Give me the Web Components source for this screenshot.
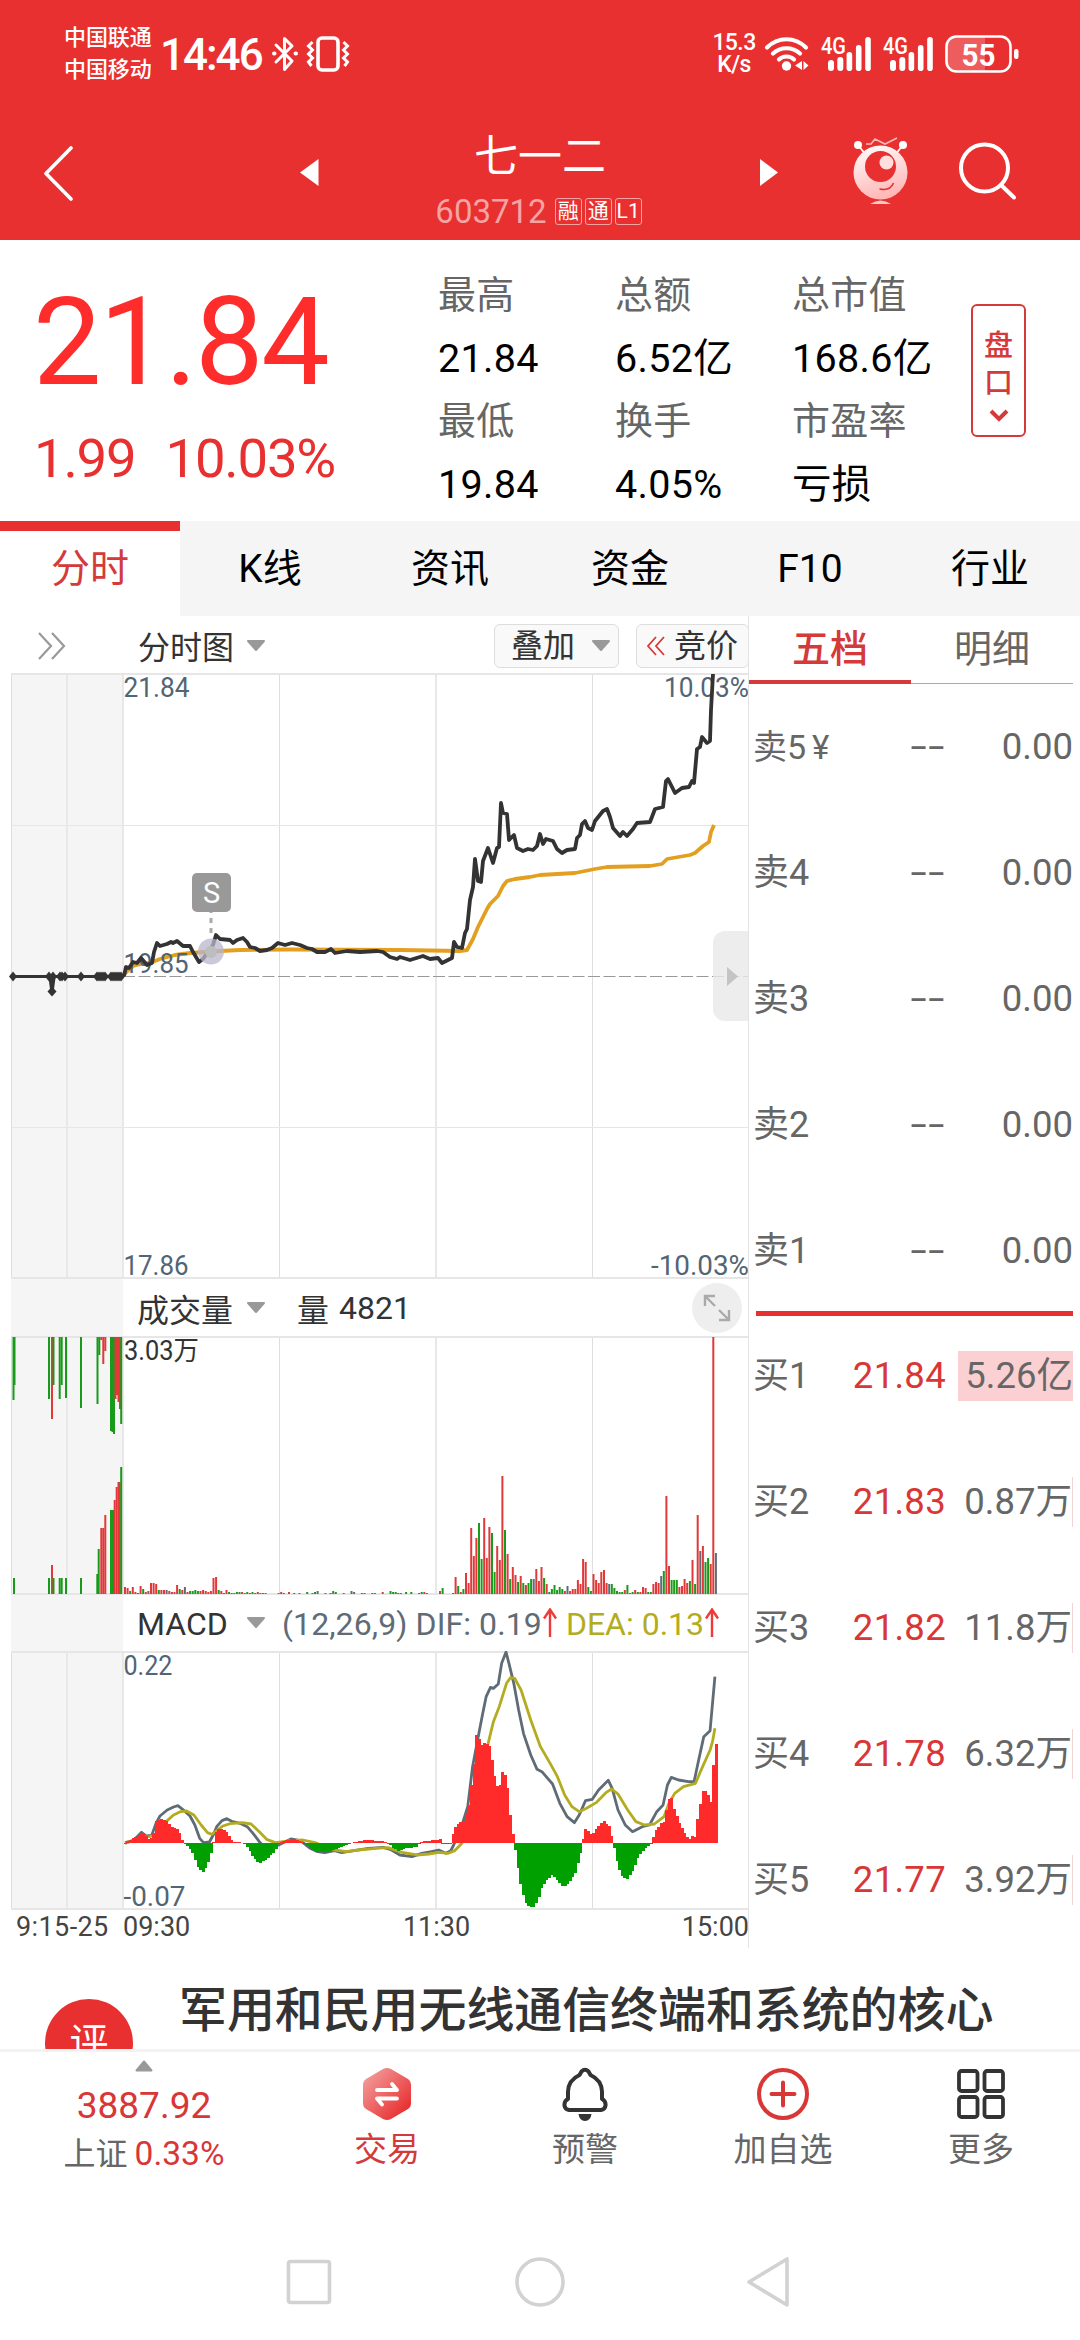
<!DOCTYPE html>
<html lang="zh-CN">
<head>
<meta charset="utf-8">
<title>七一二 603712</title>
<style>
    body {
        margin: 0;
        background: #fff;
        font-family: Roboto, "Noto Sans CJK SC", sans-serif;
        color: #333;
    }
</style>
</head>
<body>
<stock-app></stock-app>

<script>
// small base class, each element only gives its markup
class BaseElement extends HTMLElement {
    constructor() {
        super();
        this.attachShadow({mode: 'open'});
    }

    connectedCallback() {
        this.shadowRoot.innerHTML = `
            <style>
            :host { display: block; box-sizing: border-box; }
            * { box-sizing: border-box; }
            svg { display: block; flex: none; }
            </style>
            ${this.render()}
        `;
    }

    render() {
        return '<slot></slot>';
    }
}

class StockApp extends BaseElement {
    render() {
        return `
            <style>
            :host { width: 1080px; height: 2340px; overflow: hidden; }
            header { background: #e83030; height: 240px; }
            main { display: grid; grid-template-columns: 749px 331px; height: 1332px; }
            </style>
            <header>
                <status-bar></status-bar>
                <title-bar code="603712">七一二</title-bar>
            </header>
            <quote-summary></quote-summary>
            <tab-strip></tab-strip>
            <main>
                <stock-charts></stock-charts>
                <order-book></order-book>
            </main>
            <news-teaser>军用和民用无线通信终端和系统的核心</news-teaser>
            <bottom-bar></bottom-bar>
            <system-nav></system-nav>
        `;
    }
}

class SignalBars extends BaseElement {
    render() {
        return `
            <style>
            :host { width: 50px; height: 36px; }
            svg { overflow: visible; }
            </style>
            <svg width="50" height="36" viewBox="0 0 50 36" fill="#fff">
                <text x="0" y="17.500" font-size="24" font-weight="500" textLength="25" lengthAdjust="spacingAndGlyphs">4G</text>
                <rect x="7" y="24" width="6" height="11" rx="3"/>
                <rect x="16.3" y="21" width="6" height="14" rx="3"/>
                <rect x="25.6" y="16" width="5.6" height="19" rx="2.8"/>
                <rect x="34.9" y="9" width="5.6" height="26" rx="2.8"/>
                <rect x="44.2" y="1" width="5.6" height="34" rx="2.8"/>
            </svg>
        `;
    }
}

class StatusBar extends BaseElement {
    render() {
        return `
            <style>
            :host { display: flex; align-items: center; height: 108px; padding: 0 60px 0 64px; color: #fff; }
            .carrier { font-size: 22px; line-height: 32px; width: 96px; font-weight: 500; white-space: nowrap; letter-spacing: -.1px; }
            .time { font-size: 44px; font-weight: 500; width: 111px; letter-spacing: -2px; line-height: 50px; margin-top: 2px; }
            .speed { margin-left: auto; width: 46px; text-align: center; font-size: 23px; line-height: 22px; font-weight: 500; letter-spacing: -.6px; }
            .wifi { margin-left: 7px; }
            signal-bars { margin-left: 11px; }
            signal-bars + signal-bars { margin-left: 12px; }
            .battery { margin-left: 12px; }
            </style>
            <div class="carrier">中国联通<br>中国移动</div>
            <div class="time">14:46</div>
            <svg width="28" height="36" viewBox="0 0 28 36" fill="none" stroke="#fff" stroke-width="3" stroke-linejoin="round" stroke-linecap="round">
                <path d="M5 9l16 16-7.5 8.500V2.500L21 10 5 26"/>
                <path d="M3 17.500h.5M24.500 17.500h.5" stroke-width="4"/>
            </svg>
            <svg width="44" height="36" viewBox="0 0 44 36" fill="none" stroke="#fff" style="margin-left:7px">
                <rect x="12" y="2" width="20" height="32" rx="4" stroke-width="3.6"/>
                <path d="M6.500 6l-4 4 4 4-4 4 4 4-4 4 3 4M37.500 6l4 4-4 4 4 4-4 4 4 4-3 4" stroke-width="3"/>
            </svg>
            <div class="speed">15.3<br>K/s</div>
            <svg class="wifi" width="46" height="36" viewBox="0 0 46 36" fill="none" stroke="#fff" stroke-width="4.200" stroke-linecap="round">
                <path d="M3 11.500C14 .5 31 .5 42 11.500M9 17.500c7.500-7 19.500-7 27 0M15 23.500c4-4 11-4 15 0"/>
                <circle cx="22.500" cy="30" r="4.700" fill="#fff" stroke="none"/>
                <path d="M38 25v9l-7-4.500zM39.500 25v9l5-4.500z" fill="#fff" stroke="none"/>
            </svg>
            <signal-bars></signal-bars>
            <signal-bars></signal-bars>
            <svg class="battery" width="75" height="38" viewBox="0 0 75 38" fill="#fff">
                <path d="M12 2h28v34H12A10 10 0 0 1 2 26V12A10 10 0 0 1 12 2z" opacity=".22"/>
                <rect x="1.500" y="1.500" width="64" height="35" rx="10" fill="none" stroke="#fff" stroke-width="2.600"/>
                <rect x="69" y="14" width="4.500" height="10" rx="2.200"/>
                <text x="33.500" y="30.500" font-size="32" font-weight="700" text-anchor="middle" textLength="34" lengthAdjust="spacingAndGlyphs">55</text>
            </svg>
        `;
    }
}

class TitleBar extends BaseElement {
    render() {
        return `
            <style>
            :host { display: grid; grid-template-columns: 300px 138px 204px 210px 228px; height: 132px; color: #fff; }
            .name { font-size: 44px; line-height: 56px; margin-top: 21px; text-align: center; }
            .back { margin: 37px 0 0 43px; }
            .arrow { margin-top: 51px; }
            .code { display: flex; justify-content: center; align-items: center; gap: 3px; margin: 9px 0 0 -3px; height: 34px; color: #f5a3a3; font-size: 33px; white-space: nowrap; }
            .code b { font-weight: 400; width: 27px; height: 27px; line-height: 24px; border: 1.500px solid #f5a3a3; border-radius: 3px; font-size: 21px; text-align: center; color: #fff; }
            .code span { margin-right: 5px; }
            .tools { display: flex; gap: 48px; padding: 29px 0 0 1px; }
            </style>
            <svg class="back" width="32" height="56" viewBox="0 0 32 56" fill="none" stroke="#fff" stroke-width="3.600" stroke-linecap="round" stroke-linejoin="round"><path d="M28 3L3 28.500 28 54"/></svg>
            <svg class="arrow" width="20" height="28" viewBox="0 0 20 28" fill="#fff"><path d="M18.500 0v27L0 13.500z"/></svg>
            <div>
                <div class="name"><slot></slot></div>
                <div class="code"><span>${this.getAttribute('code')}</span><b>融</b><b>通</b><b>L1</b></div>
            </div>
            <svg class="arrow" width="20" height="28" viewBox="0 0 20 28" fill="#fff" style="margin-left:117px"><path d="M1 0v27l18-13.500z"/></svg>
            <div class="tools">
                <svg width="56" height="70" viewBox="0 0 56 70">
                    <defs><linearGradient id="body" x1="0" y1="0" x2=".3" y2="1"><stop offset="0" stop-color="#fff"/><stop offset="1" stop-color="#ffb9b9"/></linearGradient></defs>
                    <path d="M13 7h5l4-5 10 5L44 1" fill="none" stroke="#ffb9b9" stroke-width="1.600"/>
                    <path d="M5 8l8 10M50 8l-8 10" stroke="#fff" stroke-width="1.800"/>
                    <circle cx="5" cy="8" r="4" fill="#fff"/><circle cx="50" cy="8" r="4" fill="#fff"/>
                    <circle cx="27.500" cy="35.500" r="27" fill="url(#body)"/>
                    <circle cx="27.500" cy="29.500" r="15.500" fill="#e83030"/>
                    <circle cx="33.500" cy="25.500" r="7" fill="#ffdede"/>
                    <path d="M26.500 52c7 1.500 12-1 14-6" fill="none" stroke="#e83030" stroke-width="1.600"/>
                    <path d="M17 67q10.500-7 21 0z" fill="#ffc8c8"/>
                </svg>
                <svg width="62" height="64" viewBox="0 0 62 64" fill="none" stroke="#fff" stroke-width="4" stroke-linecap="round" style="margin-top:3px"><circle cx="27.500" cy="28" r="23.500"/><path d="M44 45l13 12.500"/></svg>
            </div>
        `;
    }
}

class QuoteItem extends BaseElement {
    render() {
        return `
            <style>
            :host { line-height: 63px; white-space: nowrap; font-size: 39.500px; letter-spacing: .3px; }
            .label { font-size: 38px; color: #666; }
            .value { color: #000; }
            </style>
            <div class="label">${this.getAttribute('label')}</div>
            <div class="value"><slot></slot></div>
        `;
    }
}

class QuoteSummary extends BaseElement {
    render() {
        return `
            <style>
            :host { display: grid; grid-template-columns: 438px 533px 55px; height: 281px; }
            .price { font-size: 122px; line-height: 140px; color: #ff2c2c; margin: 33px 0 0 33px; letter-spacing: -2.400px; }
            .change { display: flex; gap: 30px; margin: 15px 0 0 34px; font-size: 54.500px; line-height: 60px; color: #e83030; letter-spacing: -1.200px; }
            .items { display: grid; grid-template-columns: 177px 177px 179px; grid-template-rows: 126px 126px; padding-top: 24px; }
            .more { margin-top: 64px; height: 133px; border: 2.500px solid #d43a3a; border-radius: 6px; color: #d43a3a; font-size: 29px; line-height: 37px; text-align: center; padding-top: 22px; font-weight: 500; }
            .more svg { margin: 6px auto 0; }
            </style>
            <div>
                <div class="price">21.84</div>
                <div class="change"><span>1.99</span><span>10.03%</span></div>
            </div>
            <div class="items">
                <quote-item label="最高">21.84</quote-item>
                <quote-item label="总额">6.52亿</quote-item>
                <quote-item label="总市值">168.6亿</quote-item>
                <quote-item label="最低">19.84</quote-item>
                <quote-item label="换手">4.05%</quote-item>
                <quote-item label="市盈率">亏损</quote-item>
            </div>
            <div class="more">盘<br>口
                <svg width="20" height="16" viewBox="0 0 20 16" fill="none" stroke="#d43a3a" stroke-width="4"><path d="M2 3l8 8 8-8"/></svg>
            </div>
        `;
    }
}

class TabStrip extends BaseElement {
    render() {
        const tabs = ['分时', 'K线', '资讯', '资金', 'F10', '行业'];
        return `
            <style>
            :host { display: grid; grid-template-columns: repeat(6, 1fr); height: 95px; }
            div { background: #f5f5f5; color: #000; font-size: 39px; line-height: 97px; text-align: center; overflow: hidden; }
            .active { background: #fff; color: #d43a3a; border-top: 10px solid #e83030; line-height: 77px; }
            </style>
            ${tabs.map((t, i) => `<div class="${i === 0 ? 'active' : ''}">${t}</div>`).join('')}
        `;
    }
}

// px per minute and x of the first minute
const STEP = 2.603;
const FIRST = 125;
const RED = '#e2383a';
const GREEN = '#1a9a1a';
const GREY = '#5f6b78';
const COLORS = {r: RED, g: GREEN, b: GREY};

const PRICE = '124,976 126,967 129,968 133,962 137,963 141,958 147,965 152,963 154,952 157,943 160,946 167,944 171,942 173,943 177,941 183,946 190,946 193,952 199,962 203,959 208,952 213,945 216,935 220,939 230,940 233,943 237,940 243,938 247,942 250,947 255,948 260,951 267,950 272,948 278,943 285,945 292,943 300,945 307,948 312,949 317,952 325,952 331,949 335,953 347,951 360,952 377,951 383,952 390,957 397,959 400,957 410,960 423,956 430,959 438,958 442,963 452,958 454,942 457,947 462,948 465,933 467,929 470,900 473,887 475,859 478,881 481,882 483,861 488,848 493,863 497,848 499,847 501,803 503,813 507,814 509,840 514,835 517,848 523,851 528,849 533,850 537,846 540,834 543,844 546,839 553,841 557,849 562,853 567,850 575,849 577,838 580,835 582,824 585,821 588,828 592,830 595,821 603,811 607,809 610,817 613,828 620,836 623,832 627,836 633,829 637,823 650,822 655,809 663,807 666,781 668,779 675,793 682,788 689,787 692,781 694,783 697,749 700,747 702,737 707,743 710,741 711,710 713,674';
const AVERAGE = '124,974 133,966 141,964 150,963 160,959 175,955 190,953 205,952 220,951 240,950 290,949.5 400,950 460,951 467,950 473,939 478,927 487,909 490,904 498,896 503,886 507,881 515,879 530,877 540,875 575,873 585,871 595,869 607,867 650,866 662,864 667,859 690,855 695,853 703,846 709,842 711,832 714,825';

// colour and height of every minute, "-" is an empty minute
const VOLUME = `r7 r6 g3 r7 r2 g1 r8 g5 r2 b3 r11 r11 r10 g4 r4 r4 b4 r3 r2 r2 r9 g5 r4 b7 r2 g3 g3 g4 g3 r3 r4 r3 r2 r3 r16 r17 g4 r3 g1 r4
    g2 g1 r1 g2 g2 r2 r1 g2 r1 g2 g1 r2 g1 r1 r1 - - - - r1 r2 g1 - r2 - g1 - b1 - - g2 - r1 g2 b3 - - r1 - g1 g3 g2 - - r1 - - b3 b2 - -
    r1 b1 - - g1 r1 - - r2 - - g3 g2 g2 g1 r1 - g2 - g2 - - b1 g2 r2 g1 - - - - r3 g6 - - - r1 r17 g8 r2 g5 r21 r11
    r66 r38 r56 g71 g35 r76 r36 r67 g61 g22 r48 r34 r118 g64 r40 g15 r27 r19 g12 r18 g11 r9 g11 g15 b15 r25 r13 r27 g16 r10 g2 g5 g9 g4 g7 g5 r3 b8
    r3 r5 r5 r14 r10 r35 r32 g7 g3 r20 r14 r11 r22 r24 r11 b10 g10 g6 g3 g2 g2 r4 g9 r1 g2 r4 g2 r2 r7 r6 g2 g2 r10 r12 r11 b18 g23 r98
    r28 g14 g14 g14 r7 r8 r15 r11 g13 r34 g10 r79 b43 r48 g32 g36 r30 r257 b41`.split(/\s+/);

// call auction: x, colour, height
const AUCTION_TOP = '13.5g63 14.5g48 49g62 52r82 53.5g48 59.7g62 61.7g48 66g61 81g71 97.5g67 99.3g18 101.3r3 103.3r27 105.3r14 111g94 112.5g95 114g97 115.5r62 117r58 118.5r65 120r72 121.2g87';
const AUCTION_LOW = '14g16 49g16 52r29 53.5g16 59.7g16 61.7g16 66g16 81g16 97.3g20 98.7g45 101.3r66 103.3r66 105.3r79 111g84 113g84 114.7r94 116.7r107 118.5r112 119.7r112 121.2g127';

// keypoints of the macd chart, x is in minutes * 5.36
const UNIT = 0.4847;
const HIST = '258,0 274,5 284,7 292,11 300,8 308,3 316,8 322,22 330,24 345,22 355,16 368,13 375,4 380,0 388,-3 398,-10 408,-24 418,-30 428,-22 436,-8 440,0 443,10 452,15 465,12 475,5 482,1 495,1 503,0 510,-4 525,-16 535,-20 550,-16 565,-9 575,0 590,3 605,4 618,2 625,0 640,-6 655,-9 675,-9 690,-6 705,-4 720,0 740,2 755,3 790,2 800,0 810,-5 822,-8 835,-5 858,-4 866,0 872,2 900,3 908,4 912,0 920,-1 928,0 936,14 945,20 955,22 965,36 970,55 976,77 980,108 985,108 990,97 998,100 1008,98 1014,82 1020,65 1028,50 1033,72 1044,66 1050,33 1057,8 1060,0 1065,-18 1075,-48 1085,-62 1098,-65 1108,-58 1115,-45 1125,-38 1138,-32 1148,-37 1160,-44 1172,-40 1185,-30 1195,-12 1200,0 1205,15 1212,12 1220,8 1230,16 1245,22 1256,16 1262,4 1264,0 1270,-16 1280,-33 1293,-36 1305,-26 1315,-14 1330,-5 1342,0 1350,12 1362,20 1370,22 1375,42 1383,46 1390,32 1400,20 1412,8 1420,3 1428,8 1433,5 1438,28 1448,52 1455,52 1465,40 1470,84 1477,106'.split(' ').map(p => p.split(',').map(Number));
const DIF = '258,728 275,722 292,697 302,708 313,706 322,670 330,648 345,630 358,621 367,617 380,632 392,648 402,675 412,715 420,728 432,726 440,705 447,680 458,662 468,656 478,664 495,670 510,680 522,700 535,725 545,740 560,742 575,735 600,717 620,722 640,745 655,755 670,758 690,752 705,758 730,752 760,745 790,742 805,748 825,765 850,770 870,760 890,755 905,750 920,760 930,752 936,735 950,690 965,620 975,500 988,400 996,340 1003,290 1012,262 1018,265 1028,252 1035,190 1044,156 1050,190 1060,250 1070,330 1080,400 1095,465 1108,508 1118,515 1140,552 1155,610 1170,650 1185,668 1195,645 1208,602 1222,598 1235,570 1255,541 1263,565 1275,630 1290,675 1305,695 1325,680 1340,675 1355,635 1368,615 1377,555 1385,532 1400,540 1420,545 1432,545 1440,490 1452,410 1465,392 1470,310 1475,230';
const DEA = '258,730 292,712 308,710 322,705 345,662 358,645 372,635 385,633 400,645 415,675 428,698 437,703 447,692 460,678 475,671 500,668 518,672 535,695 550,718 568,728 600,722 625,720 650,728 670,740 690,750 715,755 740,750 775,745 800,743 830,757 860,765 885,762 905,757 925,760 938,752 953,730 970,670 990,540 1008,425 1018,365 1030,320 1045,250 1053,233 1062,235 1075,270 1095,360 1115,440 1135,490 1150,530 1165,585 1180,620 1195,635 1210,625 1230,608 1250,578 1262,567 1275,582 1295,630 1312,665 1330,675 1350,672 1370,650 1380,610 1392,580 1410,560 1435,550 1445,515 1465,450 1470,425 1475,385';

// grey auction area and the grid lines of one panel
function grid(top, bottom, rows = []) {
    const v = [[11.5, 1], [67, 2], [123, 2], [279.5, 1], [436, 2], [592.5, 1]];
    return `
        <rect x="11" y="${top}" width="112" height="${bottom - top}" fill="#f5f5f5"/>
        ${v.map(([x, w]) => `<rect x="${x - w / 2}" y="${top}" width="${w}" height="${bottom - top}" fill="${w === 1 ? '#dedede' : '#e8e8e8'}"/>`).join('')}
        ${[top, ...rows, bottom - 2].map(y => `<rect x="11" y="${y}" width="737" height="${rows.includes(y) ? 1 : 2}" fill="#e6e6e6"/>`).join('')}
    `;
}

function auctionBars(list, y, down) {
    return list.split(' ').map(s => {
        const [, x, c, h] = s.match(/([\d.]+)([rgb])(\d+)/);
        return `<rect x="${x - 1}" y="${down ? y : y - h}" width="2" height="${h}" fill="${COLORS[c]}"/>`;
    }).join('');
}

function histValue(x) {
    for (let i = 1; i < HIST.length; i++) {
        if (x <= HIST[i][0]) {
            const [x0, y0] = HIST[i - 1];
            const [x1, y1] = HIST[i];
            return y0 + (y1 - y0) * (x - x0) / (x1 - x0);
        }
    }
    return 0;
}

class PriceChart extends BaseElement {
    render() {
        const dots = [13, 49, 53, 60, 62, 65, 81, 97, 99, 101, 103, 105, 111, 113, 115, 117, 119, 121];
        return `
            <style>
            :host { height: 606px; }
            text { font-size: 27px; fill: #536473; }
            </style>
            <svg width="749" height="606" viewBox="0 673 749 606">
                ${grid(673, 1279, [825, 1127])}
                <path d="M123 976.500H748" stroke="#999" stroke-dasharray="12 3.500"/>
                <path d="M713 943a12 12 0 0 1 12-12h23v90h-23a12 12 0 0 1-12-12z" fill="#e9e9e9" opacity=".8"/>
                <path d="M727 967l11 9.500-11 9.500z" fill="#c4c4c4"/>
                <polyline points="${AVERAGE}" fill="none" stroke="#e3a020" stroke-width="3.800" stroke-linejoin="round"/>
                <text x="123.500" y="973" textLength="65" lengthAdjust="spacingAndGlyphs">19.85</text>
                <path d="M12 976.500H124M50 977l2 15 2-15" stroke="#333" stroke-width="3.200" fill="none"/>
                ${dots.map(x => `<path d="M${x - 4} 976.500l4-5 4 5-4 5z" fill="#333"/>`).join('')}
                <path d="M47.500 991.500l4.500-5 4.500 5-4.500 5z" fill="#333"/>
                <text x="123.500" y="697" textLength="66" lengthAdjust="spacingAndGlyphs">21.84</text>
                <text x="749" y="697" text-anchor="end" textLength="85" lengthAdjust="spacingAndGlyphs">10.03%</text>
                <text x="123.500" y="1274.500" textLength="65" lengthAdjust="spacingAndGlyphs">17.86</text>
                <text x="749" y="1274.500" text-anchor="end" textLength="98" lengthAdjust="spacingAndGlyphs">-10.03%</text>
                <polyline points="${PRICE}" fill="none" stroke="#333" stroke-width="3.800" stroke-linejoin="round"/>
                <path d="M211 912v24" stroke="#aaa" stroke-width="3" stroke-dasharray="5 5" stroke-dashoffset="4"/>
                <circle cx="211" cy="951.500" r="13" fill="#b9b6cc" opacity=".75"/>
                <circle cx="211" cy="952" r="6" fill="#bdbdbd"/>
                <rect x="192" y="873" width="39" height="39" rx="5" fill="#999"/>
                <text x="211.500" y="902.500" text-anchor="middle" style="font-size:29px;fill:#fff">S</text>
            </svg>
        `;
    }
}

class VolumeChart extends BaseElement {
    render() {
        const bars = VOLUME.map((v, i) => {
            if (v === '-') return '';
            const h = +v.slice(1);
            return `<rect x="${(FIRST + i * STEP - 1).toFixed(1)}" y="${1594 - h}" width="2" height="${h}" fill="${COLORS[v[0]]}"/>`;
        }).join('');
        return `
            <style>
            :host { height: 259px; }
            </style>
            <svg width="749" height="259" viewBox="0 1336 749 259">
                ${grid(1336, 1595)}
                ${auctionBars(AUCTION_TOP, 1337, true)}
                ${auctionBars(AUCTION_LOW, 1594, false)}
                ${bars}
                <text x="124" y="1360" font-size="27" fill="#333" textLength="75" lengthAdjust="spacingAndGlyphs">3.03万</text>
            </svg>
        `;
    }
}

class MacdChart extends BaseElement {
    render() {
        let bars = '';
        for (let i = 0; i < 228; i++) {
            const h = histValue(258 + i * 5.36);
            bars += `<rect x="${(FIRST + i * STEP - 1.3).toFixed(2)}" y="${(h > 0 ? 1843 - h : 1843).toFixed(1)}" width="3" height="${Math.max(Math.abs(h), .8).toFixed(1)}" fill="${h >= 0 ? '#ff2a2a' : '#00a000'}"/>`;
        }
        return `
            <style>
            :host { height: 259px; }
            text { font-size: 27px; fill: #536473; }
            polyline { fill: none; stroke-width: 2.8px; stroke-linejoin: round; vector-effect: non-scaling-stroke; }
            </style>
            <svg width="749" height="259" viewBox="0 1651 749 259">
                ${grid(1651, 1910)}
                <g transform="translate(0 1600) scale(${UNIT} .33333)">
                    <polyline points="${DIF}" stroke="#5f6b75"/>
                    <polyline points="${DEA}" stroke="#b3ac1e"/>
                </g>
                <g shape-rendering="crispEdges">${bars}</g>
                <text x="123.500" y="1674.500" textLength="49" lengthAdjust="spacingAndGlyphs">0.22</text>
                <text x="123.500" y="1905.500" textLength="62" lengthAdjust="spacingAndGlyphs">-0.07</text>
            </svg>
        `;
    }
}

class DropArrow extends BaseElement {
    render() {
        return `
            <style>
            :host { width: 20px; height: 12px; flex: none; }
            </style>
            <svg width="20" height="12" viewBox="0 0 20 12"><path d="M2 1h16l-8 9z" fill="#999" stroke="#999" stroke-width="2" stroke-linejoin="round"/></svg>
        `;
    }
}

class ChartHeader extends BaseElement {
    render() {
        return `
            <style>
            :host { display: flex; align-items: center; padding-left: 11px; font-size: 32px; white-space: nowrap; }
            .pad { width: 112px; align-self: stretch; background: #f5f5f5; margin-right: 14px; flex: none; }
            .name { width: 109px; flex: none; padding-top: 1px; }
            drop-arrow { margin-right: 16px; }
            </style>
            <div class="pad"></div>
            <div class="name">${this.getAttribute('name')}</div>
            <drop-arrow></drop-arrow>
            <slot></slot>
        `;
    }
}

class StockCharts extends BaseElement {
    render() {
        const up = '<svg width="16" height="30" viewBox="0 0 16 30" fill="none" stroke="#f03a3a" stroke-width="2.400"><path d="M8 29V2M2 10.500L8 1.500l6 9"/></svg>';
        return `
            <style>
            :host { border-right: 1px solid #e3e3e3; width: 749px; overflow: hidden; }
            .tools { display: flex; align-items: center; height: 57px; padding: 3px 0 0 37px; font-size: 32px; white-space: nowrap; }
            .tools .type { margin: 0 12px 2px 71px; flex: none; width: 96px; }
            .btn { display: flex; flex: none; align-items: center; height: 44px; border: 1.500px solid #ddd; border-radius: 6px; background: #f9f9f9; line-height: 40px; }
            .volume { height: 57px; }
            .macd { height: 56px; }
            .qty { margin: 0 auto 0 10px; }
            .expand { margin-right: 6px; }
            .dif, .dea, .vol, .qty { padding-top: 1px; }
            .dif { color: #5f6b75; letter-spacing: .1px; }
            .dea { color: #b3ac1e; letter-spacing: 0; margin-left: 8px; }
            .axis { display: grid; grid-template-columns: 112px 247px 133px 246px; padding-left: 11px; height: 36px; font-size: 27px; line-height: 34px; color: #444; }
            .axis span:first-child { padding-left: 5px; letter-spacing: .4px; }
            .axis span:nth-child(3) { text-align: center; }
            .axis span:last-child { text-align: right; }
            </style>
            <div class="tools">
                <svg width="30" height="30" viewBox="0 0 30 30" fill="none" stroke="#999" stroke-width="2.200"><path d="M2 2l12 13L2 28M15 2l12 13-12 13"/></svg>
                <span class="type">分时图</span><drop-arrow></drop-arrow>
                <div class="btn" style="margin-left:228px;width:125px;padding-left:16px">叠加<drop-arrow style="margin-left:16px"></drop-arrow></div>
                <div class="btn" style="margin-left:17px;width:113px;padding-left:9px">
                    <svg width="20" height="20" viewBox="0 0 20 20" fill="none" stroke="#d43a3a" stroke-width="1.800" style="margin-right:8px"><path d="M10 1l-8 9 8 9M18 1l-8 9 8 9"/></svg>竞价
                </div>
            </div>
            <price-chart></price-chart>
            <chart-header class="volume" name="成交量">
                <span class="vol" style="margin-left:15px">量</span><span class="qty">4821</span>
                <svg class="expand" width="50" height="50" viewBox="0 0 50 50" fill="none" stroke="#aaa" stroke-width="2.400">
                    <circle cx="25" cy="25" r="25" fill="#eee" stroke="none"/>
                    <path d="M13 23V13h10M13 13l10 10M37 27v10H27M37 37L27 27"/>
                </svg>
            </chart-header>
            <volume-chart></volume-chart>
            <chart-header class="macd" name="MACD">
                <span class="dif">(12,26,9) DIF: 0.19</span>${up}
                <span class="dea">DEA: 0.13</span>${up}
            </chart-header>
            <macd-chart></macd-chart>
            <div class="axis"><span>9:15-25</span><span>09:30</span><span>11:30</span><span>15:00</span></div>
        `;
    }
}

class OrderRow extends BaseElement {
    render() {
        const buy = this.hasAttribute('buy');
        const full = this.hasAttribute('full');
        return `
            <style>
            :host { display: grid; grid-template-columns: 68px 125px 127px; align-items: center; height: 126px; padding-left: 4px; font-size: 36.500px; line-height: 50px; color: #666; white-space: nowrap; }
            .price { text-align: right; color: ${buy ? '#d93636' : '#666'}; letter-spacing: .3px; }
            .price.none { transform: scaleX(1.6); transform-origin: right; letter-spacing: 1px; }
            .side { font-size: 36px; height: 51px; }
            .qty { justify-self: end; height: 50px; text-align: right; padding-left: 7px;
                ${full ? 'background: #fbd0d2;' : buy ? 'border-right: 1px solid #f3d3d5;' : ''} }
            </style>
            <span class="side"><slot></slot></span>
            <span class="price ${buy ? '' : 'none'}">${this.getAttribute('price')}</span>
            <span class="qty">${this.getAttribute('qty')}</span>
        `;
    }
}

class OrderBook extends BaseElement {
    render() {
        return `
            <style>
            :host { padding-right: 7px; }
            .tabs { display: grid; grid-template-columns: 162px 162px; height: 68px; font-size: 38px; line-height: 66px; text-align: center; color: #666; }
            .tabs div { border-bottom: 1px solid #d49a9a; height: 68px; }
            .tabs .active { color: #d43a3a; font-weight: 500; border-bottom: 4px solid #d43a3a; }
            .sell { height: 629px; }
            .line { height: 5px; margin: -2px 0 -3px 7px; background: #e83030; }
            .yen { font-size: 33px; margin-left: 6px; }
            .first { font-size: 34px; }
            </style>
            <div class="tabs"><div class="active">五档</div><div>明细</div></div>
            <div class="sell">
                <order-row price="--" qty="0.00"><span class="first">卖5</span><span class="yen">¥</span></order-row>
                <order-row price="--" qty="0.00">卖4</order-row>
                <order-row price="--" qty="0.00">卖3</order-row>
                <order-row price="--" qty="0.00">卖2</order-row>
                <order-row price="--" qty="0.00">卖1</order-row>
            </div>
            <div class="line"></div>
            <order-row buy full price="21.84" qty="5.26亿">买1</order-row>
            <order-row buy price="21.83" qty="0.87万">买2</order-row>
            <order-row buy price="21.82" qty="11.8万">买3</order-row>
            <order-row buy price="21.78" qty="6.32万">买4</order-row>
            <order-row buy price="21.77" qty="3.92万">买5</order-row>
        `;
    }
}

class NewsTeaser extends BaseElement {
    render() {
        return `
            <style>
            :host { display: flex; height: 101px; overflow: hidden; padding-left: 45px; }
            .badge { flex: none; width: 88px; height: 88px; margin-top: 51px; border-radius: 50%; background: #e83030; color: #fff; font-size: 39px; line-height: 89px; text-align: center; }
            .title { margin-left: 46px; font-size: 48px; line-height: 72px; margin-top: 27px; font-weight: 500; letter-spacing: -.1px; white-space: nowrap; }
            </style>
            <div class="badge">评</div>
            <div class="title"><slot></slot></div>
        `;
    }
}

class NavItem extends BaseElement {
    render() {
        return `
            <style>
            :host { display: flex; flex-direction: column; align-items: center; padding-top: 15px; font-size: 33px; line-height: 40px; color: #666; }
            .icon { height: 63px; }
            </style>
            <div class="icon"><slot name="icon"></slot></div>
            <slot></slot>
        `;
    }
}

class BottomBar extends BaseElement {
    render() {
        return `
            <style>
            :host { display: grid; grid-template-columns: 288px repeat(4, 198px); height: 133px; border-top: 3px solid #f3f3f3; }
            .index { color: #d93636; text-align: center; }
            .index svg { margin: 8px auto 0 134px; }
            .point { font-size: 37px; line-height: 44px; margin-top: 12px; }
            .rate { font-size: 33.500px; line-height: 44px; margin-top: 4px; }
            .rate span { color: #666; font-size: 32px; margin-right: 7px; }
            </style>
            <div class="index">
                <svg width="20" height="12" viewBox="0 0 20 12"><path d="M10 1.500l7.500 9h-15z" fill="#999" stroke="#999" stroke-width="2" stroke-linejoin="round"/></svg>
                <div class="point">3887.92</div>
                <div class="rate"><span>上证</span>0.33%</div>
            </div>
            <nav-item style="color:#d43a3a">
                <svg slot="icon" width="48" height="54" viewBox="0 0 48 54">
                    <defs><linearGradient id="hex" x1="0" y1="0" x2="1" y2="1"><stop offset=".1" stop-color="#f39a9a"/><stop offset=".85" stop-color="#e83232"/></linearGradient></defs>
                    <path d="M20 2q4-2 8 0l17 10q3 2 3 5v20q0 3-3 5L28 52q-4 2-8 0L3 42q-3-2-3-5V17q0-3 3-5z" fill="url(#hex)"/>
                    <path d="M14 23h20l-5-6M34 31.500H14l5 6" fill="none" stroke="#fff" stroke-width="3.800" stroke-linecap="round" stroke-linejoin="round"/>
                </svg>
                交易
            </nav-item>
            <nav-item>
                <svg slot="icon" width="48" height="54" viewBox="0 0 48 54" fill="none" stroke="#333" stroke-width="4" stroke-linejoin="round">
                    <path d="M20.500 4.500q3.500-3.500 7 0l2 3.500q11 5 11.500 16.500v7.500q4 2 3.500 6.500-.5 4-4.500 4.500H8q-4-.5-4.500-4.500Q3 34 7 32v-7.500Q7.500 13 18.500 8z"/>
                    <path d="M17.500 47h13q-1 7-6.500 7t-6.500-7z" fill="#333" stroke="none"/>
                </svg>
                预警
            </nav-item>
            <nav-item>
                <svg slot="icon" width="54" height="54" viewBox="0 0 54 54" fill="none" stroke="#d93636" stroke-width="4" stroke-linecap="round"><circle cx="27" cy="27" r="24"/><path d="M27 15.500v23M15.500 27h23"/></svg>
                加自选
            </nav-item>
            <nav-item>
                <svg slot="icon" width="50" height="54" viewBox="0 0 50 54" fill="none" stroke="#333" stroke-width="3.800">
                    <rect x="3" y="4" width="18.500" height="20" rx="2.500"/><rect x="28.500" y="4" width="18.500" height="20" rx="2.500"/>
                    <rect x="3" y="30" width="18.500" height="20" rx="2.500"/><rect x="28.500" y="30" width="18.500" height="20" rx="2.500"/>
                </svg>
                更多
            </nav-item>
        `;
    }
}

class SystemNav extends BaseElement {
    render() {
        return `
            <style>
            :host { display: flex; justify-content: center; gap: 179px; height: 158px; padding-top: 74px; }
            </style>
            <svg width="52" height="52" viewBox="0 0 52 52" fill="none" stroke="#d2d2d2" stroke-width="3.600"><rect x="5.500" y="5.500" width="41" height="41" rx="2"/></svg>
            <svg width="52" height="52" viewBox="0 0 52 52" fill="none" stroke="#d2d2d2" stroke-width="3.600"><circle cx="26" cy="26" r="23"/></svg>
            <svg width="52" height="52" viewBox="0 0 52 52" fill="none" stroke="#d2d2d2" stroke-width="3.600" stroke-linejoin="round"><path d="M42 3v46L4 26z"/></svg>
        `;
    }
}

customElements.define('signal-bars', SignalBars);
customElements.define('status-bar', StatusBar);
customElements.define('title-bar', TitleBar);
customElements.define('quote-item', QuoteItem);
customElements.define('quote-summary', QuoteSummary);
customElements.define('tab-strip', TabStrip);
customElements.define('drop-arrow', DropArrow);
customElements.define('chart-header', ChartHeader);
customElements.define('price-chart', PriceChart);
customElements.define('volume-chart', VolumeChart);
customElements.define('macd-chart', MacdChart);
customElements.define('stock-charts', StockCharts);
customElements.define('order-row', OrderRow);
customElements.define('order-book', OrderBook);
customElements.define('news-teaser', NewsTeaser);
customElements.define('nav-item', NavItem);
customElements.define('bottom-bar', BottomBar);
customElements.define('system-nav', SystemNav);
customElements.define('stock-app', StockApp);
</script>
</body>
</html>
